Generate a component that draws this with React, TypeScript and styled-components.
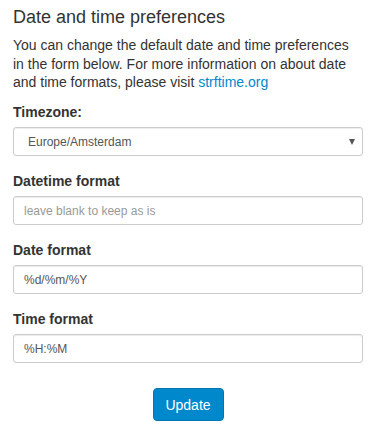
import React from "react";
import styled, { createGlobalStyle } from "styled-components";

const Global = createGlobalStyle`
  html, body { margin: 0; padding: 0; background: #fff; }
  body {
    font-family: "Liberation Sans", Arial, Helvetica, sans-serif;
    font-size: 14px;
    line-height: 20px;
    color: #333;
  }
  * { box-sizing: border-box; }
`;

const Page = styled.div`
  width: 380px;
  padding: 4px 17px 0 13px;
`;

const Title = styled.h3`
  margin: 0 0 6px;
  font-size: 18px;
  font-weight: 400;
  line-height: 26px;
  color: #333;
`;

const Intro = styled.p`
  margin: 0 0 10.5px;
  font-size: 14px;
  line-height: 18.5px;
`;

const Link = styled.a`
  color: #0088cc;
  text-decoration: none;
`;

const Form = styled.form`
  display: flex;
  flex-direction: column;
`;

const Group = styled.div`
  display: flex;
  flex-direction: column;
  margin-bottom: 15px;
`;

const Label = styled.label`
  font-weight: 700;
  font-size: 14px;
  line-height: 20px;
  margin-bottom: 5px;
`;

const fieldCss = `
  width: 100%;
  height: 29px;
  border: 1px solid #ccc;
  border-radius: 3px;
  background: #fff;
  font-family: "Liberation Sans", Arial, Helvetica, sans-serif;
  font-size: 12px;
  color: #555;
  box-shadow: inset 0 1px 1px rgba(0,0,0,0.075);
  outline: none;
`;

const SelectWrap = styled.div`
  position: relative;
`;

const Select = styled.select`
  ${fieldCss}
  appearance: none;
  -webkit-appearance: none;
  padding: 0 24px 0 14px;
`;

const Caret = styled.span`
  position: absolute;
  right: 8px;
  top: 50%;
  transform: translateY(-50%);
  pointer-events: none;
  width: 0;
  height: 0;
  border-left: 3.5px solid transparent;
  border-right: 3.5px solid transparent;
  border-top: 6px solid #555;
`;

const Input = styled.input`
  ${fieldCss}
  padding: 0 10px;
  &::placeholder { color: #999; opacity: 1; }
`;

const Actions = styled.div`
  display: flex;
  justify-content: center;
  padding-top: 10px;
`;

const Button = styled.button`
  width: 71px;
  height: 33px;
  background: #0088cc;
  border: 1px solid #0077b3;
  border-radius: 4px;
  color: #fff;
  font-family: "Liberation Sans", Arial, Helvetica, sans-serif;
  font-size: 14px;
  padding: 0;
  cursor: pointer;
`;

export default function App() {
  return (
    <Page>
      <Global />
      <Title>Date and time preferences</Title>
      <Intro>
        You can change the default date and time preferences in the form below. For more
        information on about date and time formats, please visit{" "}
        <Link href="#">strftime.org</Link>
      </Intro>
      <Form onSubmit={(e) => e.preventDefault()}>
        <Group>
          <Label>Timezone:</Label>
          <SelectWrap>
            <Select defaultValue="Europe/Amsterdam">
              <option>Europe/Amsterdam</option>
            </Select>
            <Caret />
          </SelectWrap>
        </Group>
        <Group>
          <Label>Datetime format</Label>
          <Input placeholder="leave blank to keep as is" />
        </Group>
        <Group>
          <Label>Date format</Label>
          <Input defaultValue="%d/%m/%Y" />
        </Group>
        <Group>
          <Label>Time format</Label>
          <Input defaultValue="%H:%M" />
        </Group>
        <Actions>
          <Button type="submit">Update</Button>
        </Actions>
      </Form>
    </Page>
  );
}
